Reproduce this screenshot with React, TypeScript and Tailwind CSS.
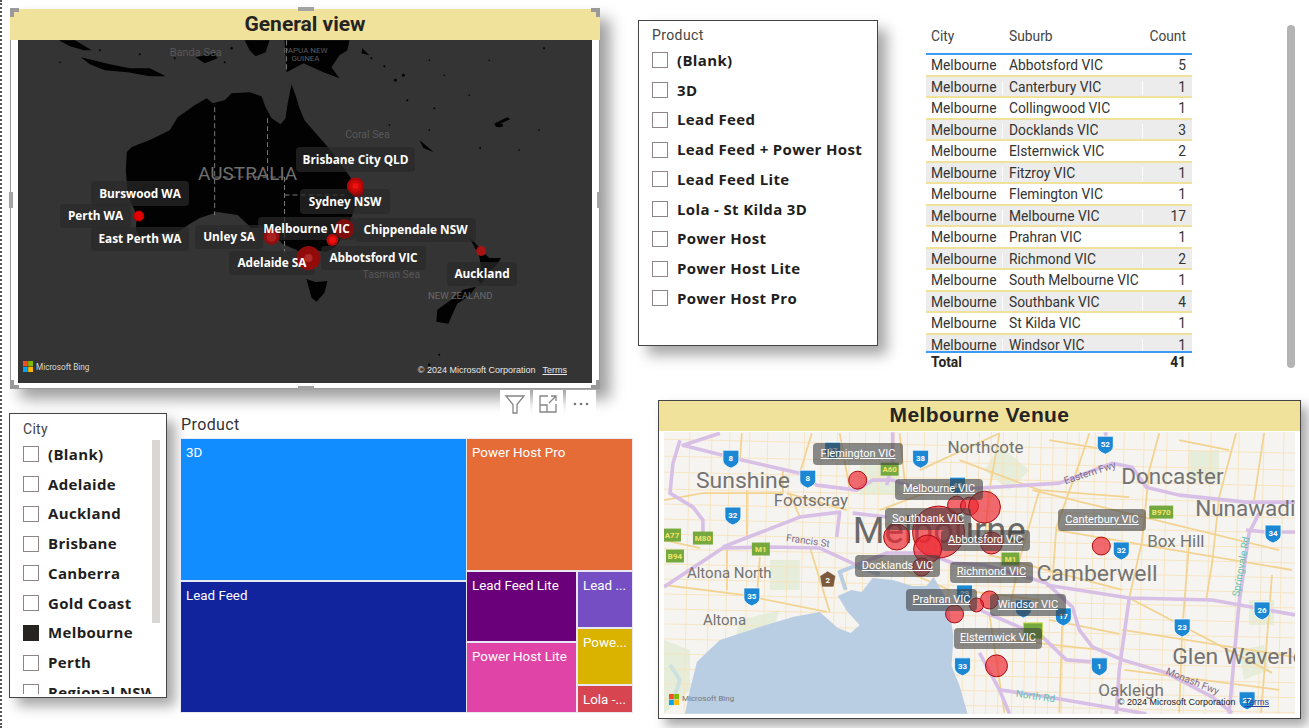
import React from "react";

const products = ["(Blank)", "3D", "Lead Feed", "Lead Feed + Power Host", "Lead Feed Lite", "Lola - St Kilda 3D", "Power Host", "Power Host Lite", "Power Host Pro"];
const cities = ["(Blank)", "Adelaide", "Auckland", "Brisbane", "Canberra", "Gold Coast", "Melbourne", "Perth", "Regional NSW"];
const rows: [string, number][] = [
  ["Abbotsford VIC", 5], ["Canterbury VIC", 1], ["Collingwood VIC", 1], ["Docklands VIC", 3], ["Elsternwick VIC", 2],
  ["Fitzroy VIC", 1], ["Flemington VIC", 1], ["Melbourne VIC", 17], ["Prahran VIC", 1], ["Richmond VIC", 2],
  ["South Melbourne VIC", 1], ["Southbank VIC", 4], ["St Kilda VIC", 1], ["Windsor VIC", 1],
];

// [text, left, top, width, height] relative to the map's top-left
const darkLabels: [string, number, number, number, number][] = [
  ["Burswood WA", 73, 141, 98, 25], ["Perth WA", 42, 164, 71, 24], ["East Perth WA", 73, 187, 98, 24],
  ["Unley SA", 177, 185, 68, 24], ["Melbourne VIC", 240, 177, 97, 23], ["Adelaide SA", 211, 211, 86, 24],
  ["Brisbane City QLD", 278, 107, 119, 25], ["Sydney NSW", 282, 149, 90, 25],
  ["Chippendale NSW", 337, 178, 121, 24], ["Abbotsford VIC", 303, 206, 105, 24], ["Auckland", 429, 222, 70, 24],
];
const venueLabels: [string, number, number, number, number][] = [
  ["Flemington VIC", 149, 11, 90, 22], ["Melbourne VIC", 231, 47, 88, 21], ["Southbank VIC", 221, 76, 86, 22],
  ["Abbotsford VIC", 277, 98, 89, 21], ["Docklands VIC", 191, 123, 85, 22], ["Richmond VIC", 286, 130, 83, 21],
  ["Prahran VIC", 242, 157, 71, 22], ["Windsor VIC", 326, 162, 76, 22], ["Elsternwick VIC", 290, 196, 88, 21],
  ["Canterbury VIC", 394, 77, 88, 22],
];

const Check = ({ on }: { on?: boolean }) => (
  <span className={on ? "h-4 w-4 shrink-0 border border-[#252423] bg-[#252423]" : "h-4 w-4 shrink-0 border border-[#8f8585] bg-white"} />
);

const SlicerRow = ({ label, on }: { label: string; on?: boolean }) => (
  <div className="flex h-[29.75px] shrink-0 items-center gap-[9px]">
    <Check on={on} />
    <span className="whitespace-nowrap font-['Open_Sans',sans-serif] text-[15px] leading-none font-bold tracking-[0.35px] text-[#1f1e1d]">{label}</span>
  </div>
);

const BingLogo = () => (
  <svg width="10" height="11" viewBox="0 0 10 11" className="shrink-0">
    <rect width="4.8" height="5.2" fill="#f25022" />
    <rect x="5.2" width="4.8" height="5.2" fill="#7fba00" />
    <rect y="5.8" width="4.8" height="5.2" fill="#00a4ef" />
    <rect x="5.2" y="5.8" width="4.8" height="5.2" fill="#ffb900" />
  </svg>
);

const Handle = ({ className }: { className: string }) => <div className={"absolute bg-[#a3a3a3] " + className} />;

const Corner = ({ className }: { className: string }) => <div className={"absolute h-[9px] w-[9px] border-[#9a9a9a] " + className} />;

const seaLabels: [string, number, number, number, string][] = [
  ["Banda Sea", 196, 56, 11, "#585858"], ["PAPUA NEW", 306, 53, 8, "#5c5c5c"], ["GUINEA", 306, 61, 8, "#5c5c5c"],
  ["Coral Sea", 368, 138, 10.5, "#585858"], ["Tasman Sea", 392, 278, 10.5, "#585858"], ["NEW ZEALAND", 461, 299, 9.5, "#6a6a6a"],
];
const specks: [number, number, number][] = [
  [396, 80, 1.5], [404, 75, 1.5], [435, 108, 1], [481, 148, 1], [372, 58, 1], [385, 66, 1], [408, 100, 1], [445, 75, 0.8], [470, 95, 0.8], [390, 125, 0.8],
  [520, 150, 0.8], [540, 130, 0.8], [545, 48, 1], [490, 60, 0.8], [430, 60, 0.8], [440, 355, 1], [430, 365, 1.2], [120, 70, 1], [175, 58, 1], [60, 62, 0.8],
  [100, 50, 1], [140, 54, 1], [225, 62, 1], [232, 48, 1.2], [430, 130, 0.8], [410, 170, 0.8], [376, 205, 0.6],
];

const DarkMapArt = () => (
  <svg viewBox="18 40 575 343" className="absolute inset-0 h-full w-full">
    <g fill="#020202">
      <path d="M127 152 132 147 150 140 170 130 178 117 195 105 207 98 213 103 225 100 232 93 250 92 262 96 266 107 272 118 281 124 286 118 288 104 292 84 296 95 300 108 305 120 318 135 331 150 342 165 350 176 357 188 358 200 354 212 348 228 342 238 335 248 326 252 315 250 305 256 297 250 283 244 275 235 268 240 262 228 252 228 238 215 218 212 200 218 190 224 178 232 160 233 140 237 136 230 137 215 128 195 126 170Z" />
      <path d="M307 279 316 282 328 281 325 293 317 302 312 298Z" />
      <path d="M470 237 476 243 482 250 490 258 502 258 498 264 490 272 482 284 478 280 482 268 480 256Z" />
      <path d="M477 287 470 296 458 304 449 324 437 322 438 310 452 300 464 290Z" />
      <path d="M285 40 287 72 304 63 324 72 340 78 332 67 340 55 348 50 350 40Z" />
      <path d="M59 40 75 40 92 50 84 50 70 46Z" />
      <path d="M81 57 110 64 130 68 150 68 166 76 150 76 128 72 105 70 90 64Z" />
      <path d="M245 40 270 40 266 52 256 56 250 50Z" />
      <path d="M196 57 214 53 218 58 205 63Z" />
      <path d="M363 48 370 55 362 53Z" />
      <path d="M420 140 432 150 434 152 424 148Z" />
      <path d="M494 124 508 117 511 119 500 124Z" />
      <ellipse cx="500" cy="125" rx="4" ry="2" />
      {specks.map(([x, y, r]) => <circle key={x + "-" + y} cx={x} cy={y} r={r} />)}
    </g>
    <g stroke="#7a7a7a" strokeWidth="1" strokeDasharray="5 3" fill="none">
      <path d="M215 107V215" /><path d="M268 118V177" /><path d="M215 177H285" /><path d="M285 177V253" /><path d="M285 195H345" /><path d="M287 40V72" />
    </g>
    {seaLabels.map(([t, x, y, s, c]) => (
      <text key={t} x={x} y={y} textAnchor="middle" fontFamily="Roboto, sans-serif" fontSize={s} fill={c}>{t}</text>
    ))}
    <text x="248" y="180" textAnchor="middle" fontFamily="Roboto, sans-serif" fontSize="19" fill="#6e6e6e">AUSTRALIA</text>
  </svg>
);

const DarkBubbles = () => (
  <svg viewBox="18 40 575 343" className="absolute inset-0 h-full w-full">
    <circle cx="139" cy="216" r="5" fill="#e00000" stroke="#b80000" />
    <circle cx="272" cy="237" r="8" fill="#8e0f0f" />
    <circle cx="272" cy="237" r="5" fill="#a82020" />
    <circle cx="358" cy="190" r="7" fill="#7c1010" />
    <circle cx="356" cy="186" r="8.5" fill="#ad0808" />
    <circle cx="356" cy="186" r="6" fill="#c90a0a" />
    <circle cx="356" cy="186" r="3" fill="#f21010" />
    <circle cx="345" cy="229" r="10" fill="#7c0e0e" />
    <circle cx="333" cy="240" r="6" fill="#b50b0b" />
    <circle cx="333" cy="240" r="3.5" fill="#ef0d0d" />
    <circle cx="309" cy="258" r="12" fill="#920b0b" />
    <circle cx="309" cy="258" r="4" fill="#b02a2a" />
    <circle cx="482" cy="251" r="5" fill="#a81313" />
  </svg>
);

const thinV = [690, 712, 730, 750, 768, 790, 805, 822, 838, 850, 866, 880, 895, 908, 925, 938, 952, 968, 980, 992, 1004, 1018, 1030, 1042, 1054, 1068, 1080, 1096, 1108, 1125, 1145, 1168, 1190, 1212, 1240, 1265, 1285];
const thinH = [445, 462, 478, 495, 510, 525, 540, 555, 570, 585, 600, 615, 630, 645, 660, 675, 690, 705];

const majorRoads = [
  "M664 585 743 595 827 612", "M727 550V590", "M760 557 757 597", "M810 547 830 612", "M703 493H783V470", "M747 490V540", "M787 493 847 510",
  "M740 460 742 433", "M664 500 703 493", "M664 540 700 548", "M800 517 790 493", "M812 433 800 473", "M840 433 850 490",
  "M1090 433 1080 463 1057 527 1053 580", "M1033 490 1280 550", "M1057 530 1293 570", "M1237 433 1220 497 1213 563 1207 600",
  "M1190 543 1183 630 1180 713", "M1123 630 1295 657", "M1000 433 990 490 985 540", "M960 460 1040 490 1130 497", "M1040 490 1020 560 1010 610",
  "M990 555 1123 590", "M1160 433 1150 470 1143 540 1130 598", "M1265 433 1255 500", "M1050 620 1120 634", "M1063 620 1060 713",
  "M1125 670 1280 690", "M1273 575 1262 713", "M1010 640 1100 650", "M1130 598 1273 673", "M900 433 905 480", "M920 470 1000 433", "M880 510 960 480",
  "M880 560 950 590", "M960 590 1040 600", "M990 615 1005 713", "M1050 440 1110 450", "M1180 440 1230 450",
];
const motorways = [
  "M680 440 673 463 670 493 693 507 703 520 703 543",
  "M720 433 683 445 743 460 800 473 817 485 857 490 873 480 893 480 913 487",
  "M664 587 723 548 770 547 820 548 857 565 887 553 927 553 953 563 985 565 1047 583 1073 607 1080 630 1093 647 1123 660 1167 673 1213 697 1233 713",
  "M940 490 980 488 1060 483 1113 463 1133 467 1147 487 1180 495 1247 502 1296 502",
  "M1047 585 1130 598 1213 600 1296 615",
  "M1130 598 1120 670 1117 714",
  "M1260 513 1250 533 1240 603 1230 714",
  "M980 610 1043 637 1067 660 1093 662",
  "M980 653 1000 690 1010 714",
  "M1000 690 1047 697 1147 714",
  "M723 547 800 517 840 512 837 537",
  "M853 513 887 517",
  "M893 432 893 463 887 485",
  "M1296 532 1267 532 1247 530",
  "M913 487 940 490",
  "M1106 432 1108 445",
];

const Shield = ({ x, y, n }: { x: number; y: number; n: string }) => (
  <g>
    <path d={`M${x - 8} ${y - 8}H${x + 8}V${y + 2}Q${x + 8} ${y + 7} ${x} ${y + 10}Q${x - 8} ${y + 7} ${x - 8} ${y + 2}Z`} fill="#1c87d3" stroke="#fff" strokeWidth="0.8" />
    <text x={x} y={y + 3} textAnchor="middle" fontFamily="Roboto, sans-serif" fontWeight="700" fontSize="8" fill="#fff">{n}</text>
  </g>
);
const Badge = ({ x, y, n, w = 16 }: { x: number; y: number; n: string; w?: number }) => (
  <g>
    <rect x={x - w / 2} y={y - 6.5} width={w} height="13" fill="#76a93d" />
    <text x={x} y={y + 3} textAnchor="middle" fontFamily="Roboto, sans-serif" fontWeight="700" fontSize="8" fill="#f3e36b">{n}</text>
  </g>
);

const places: [string, number, number, number][] = [
  ["Sunshine", 696, 488, 23], ["Footscray", 774, 506, 17], ["Northcote", 948, 453, 17], ["Doncaster", 1122, 484, 22.5],
  ["Nunawading", 1196, 516, 22.5], ["Box Hill", 1148, 547, 17], ["Camberwell", 1037, 581, 23], ["Altona North", 687, 578, 15],
  ["Altona", 703, 625, 15], ["Glen Waverley", 1173, 664, 23], ["Oakleigh", 1099, 696, 17],
];
const bubbles: [number, number, number][] = [
  [858, 480, 9], [897, 537, 13], [939, 532, 26], [928, 549, 14], [922, 567, 9], [957, 505, 9], [970, 506, 9], [985, 507, 16],
  [992, 543, 11], [1102, 546, 9], [997, 666, 11], [990, 600, 9], [977, 605, 7], [955, 614, 9],
];

const VenueMapArt = () => (
  <svg viewBox="664 432 632 282" className="absolute inset-0 h-full w-full">
    <g fill="#e6eedb">
      <path d="M664 640 690 650 690 690 664 714Z" /><path d="M1000 445 1030 470 1010 490 985 470Z" /><path d="M1190 450H1220V480H1190Z" />
      <path d="M1250 600H1275V625H1250Z" /><path d="M1240 650 1265 645 1270 670 1245 680Z" /><path d="M770 560H800V590H770Z" /><path d="M860 465H900V495H860Z" /><path d="M740 620 780 610 770 640 735 640Z" />
    </g>
    <g stroke="#f6e3bd" strokeWidth="0.9" fill="none">
      {thinV.map((x) => <path key={x} d={`M${x} 432 ${x - 6} 714`} />)}
      {thinH.map((y) => <path key={y} d={`M664 ${y - 6} 1296 ${y + 8}`} />)}
    </g>
    <g stroke="#f2d392" strokeWidth="1.8" fill="none" strokeLinejoin="round">
      {majorRoads.map((d) => <path key={d} d={d} />)}
    </g>
    <path d="M685 714 690 690 697 662 720 640 760 627 793 617 820 612 838 628 851 633 860 625 848 612 838 596 852 590 862 592 873 578 893 580 913 586 927 586 934 577 949 603 954 637 952 666 960 686 968 714Z" fill="#b9cde3" />
    <path d="M846 590 840 572 855 566 880 574" fill="none" stroke="#b9cde3" strokeWidth="4" />
    <path d="M670 665 680 680 672 705" fill="none" stroke="#cfe0e0" strokeWidth="4" />
    <g stroke="#d8bfe6" strokeWidth="3.6" fill="none" strokeLinejoin="round">
      {motorways.map((d) => <path key={d} d={d} />)}
    </g>
    {places.map(([t, x, y, s]) => (
      <text key={t} x={x} y={y} fontFamily="Roboto, sans-serif" fontSize={s} fill="#737373">{t}</text>
    ))}
    <text x="853" y="543" fontFamily="Roboto, sans-serif" fontSize="36.5" fill="#6a6a6a">Melbourne</text>
    <text x="786" y="541" fontFamily="Roboto, sans-serif" fontSize="10" fill="#7c6a8a" transform="rotate(8 786 541)">Francis St</text>
    <text x="1066" y="484" fontFamily="Roboto, sans-serif" fontSize="10" fill="#7c6a8a" transform="rotate(-18 1066 484)">Eastern Fwy</text>
    <text x="1166" y="674" fontFamily="Roboto, sans-serif" fontSize="10" fill="#7c6a8a" transform="rotate(22 1166 674)">Monash Fwy</text>
    <text x="1016" y="697" fontFamily="Roboto, sans-serif" fontSize="10" fill="#66c2ac" transform="rotate(8 1016 697)">North Rd</text>
    <text x="1240" y="597" fontFamily="Roboto, sans-serif" fontSize="10" fill="#66c2ac" transform="rotate(-80 1240 597)">Springvale Rd</text>
    {([[731, 458, "8"], [808, 478, "8"], [733, 515, "32"], [921, 458, "38"], [752, 596, "35"], [963, 666, "33"], [965, 593, "29"], [958, 485, "45"], [833, 450, "37"], [1106, 444, "52"], [1122, 550, "32"], [1274, 533, "34"], [1263, 610, "26"], [1183, 627, "23"], [1100, 666, "1"], [1064, 616, "17"], [1248, 700, "27"], [1024, 608, ""]] as [number, number, string][]).map(([x, y, n]) => <Shield key={x + "-" + y} x={x} y={y} n={n} />)}
    <Badge x={672} y={535} n="A77" w={18} /><Badge x={703} y={538} n="M80" w={20} /><Badge x={675} y={556} n="B94" w={18} />
    <Badge x={761} y={549} n="M1" w={18} /><Badge x={890} y={469} n="A60" w={18} /><Badge x={1011} y={559} n="M1" w={18} /><Badge x={1162} y={512} n="B970" w={24} />
    <rect x="1024" y="623" width="19" height="16" fill="#76a93d" stroke="#c9d84a" />
    <path d="M828 571 836 576 834 587H822L820 576Z" fill="#7d5a3c" stroke="#fff" strokeWidth="0.6" />
    <text x="828" y="583" textAnchor="middle" fontFamily="Roboto, sans-serif" fontWeight="700" fontSize="8" fill="#fff">2</text>
    {bubbles.map(([x, y, r]) => <circle key={x + "-" + y} cx={x} cy={y} r={r} fill="#ee2630" fillOpacity="0.68" stroke="#a80c12" strokeWidth="1" />)}
  </svg>
);

const Cell = ({ label, className }: { label: string; className: string }) => (
  <div className={"overflow-hidden whitespace-nowrap pl-[5px] pt-[5px] font-['Roboto',sans-serif] text-[13.4px] leading-[18px] text-white " + className}>{label}</div>
);

export default function App() {
  return (
    <div className="flex h-[728px] w-[1309px] overflow-hidden border-l-2 border-dotted border-[#555] bg-white font-['Roboto',sans-serif]">
      {/* left column */}
      <div className="relative w-[636px] shrink-0">
        <section className="relative z-10 mt-[9px] ml-[8px] flex h-[380px] w-[590px] flex-col border-x border-b border-[#9b9b9b] bg-white shadow-[10px_10px_14px_rgba(0,0,0,0.38)]">
          <h1 className="-mx-px flex h-[31px] shrink-0 items-center justify-center bg-[#f0e19b] text-[21px] leading-none font-bold text-[#252423]">General view</h1>
          <div className="relative mx-[7px] h-[343px] bg-[#343434]">
            <DarkMapArt />
            {darkLabels.map(([t, l, top, w, h]) => (
              <div key={t} className="absolute rounded bg-[#2a2a2a]/70" style={{ left: l, top, width: w, height: h }} />
            ))}
            <DarkBubbles />
            {darkLabels.map(([t, l, top, w, h]) => (
              <div key={t} className="absolute flex items-center justify-center font-['Open_Sans',sans-serif] text-[11.8px] font-bold whitespace-nowrap text-white" style={{ left: l, top, width: w, height: h }}>{t}</div>
            ))}
            <div className="absolute bottom-[10px] left-[5px] flex items-center gap-[3px] text-[8.2px] text-[#d8d8d8]"><BingLogo />Microsoft Bing</div>
            <div className="absolute right-[25px] bottom-[6px] flex gap-[7px] font-['Liberation_Sans',sans-serif] text-[9px] text-[#e8e8e8]"><span>© 2024 Microsoft Corporation</span><span className="underline">Terms</span></div>
          </div>
          <Corner className="-top-[1px] -left-[1px] border-t-4 border-l-4" />
          <Corner className="-top-[1px] -right-[1px] border-t-4 border-r-4" />
          <Corner className="-bottom-[1px] -left-[1px] border-b-4 border-l-4" />
          <Corner className="-right-[1px] -bottom-[1px] border-r-4 border-b-4" />
          <Handle className="-top-[2px] left-[287px] h-[4px] w-[16px]" />
          <Handle className="-bottom-[2px] left-[287px] h-[4px] w-[16px]" />
          <Handle className="top-[183px] -left-[2px] h-[16px] w-[4px]" />
          <Handle className="top-[183px] -right-[2px] h-[16px] w-[4px]" />
        </section>
        <div className="absolute top-[390px] left-[498px] z-20 flex gap-[3px]">
          <div className="flex h-[28px] w-[30px] items-center justify-center bg-white">
            <svg width="22" height="22" viewBox="0 0 22 22" fill="none" stroke="#858585" strokeWidth="1.3"><path d="M2 3h18l-7 8.5V20h-4v-8.5Z" /></svg>
          </div>
          <div className="flex h-[28px] w-[30px] items-center justify-center bg-white">
            <svg width="20" height="20" viewBox="0 0 20 20" fill="none" stroke="#858585" strokeWidth="1.3"><path d="M10 2H2v16h16v-8" /><path d="M2 11h7v7" /><path d="M11 9l7-7M13 2h5v5" /></svg>
          </div>
          <div className="flex h-[28px] w-[30px] items-center justify-center bg-white">
            <svg width="18" height="6" viewBox="0 0 18 6" fill="#777"><circle cx="3" cy="3" r="1.3" /><circle cx="9" cy="3" r="1.3" /><circle cx="15" cy="3" r="1.3" /></svg>
          </div>
        </div>

        <div className="mt-[24px] flex">
          <aside className="ml-[7px] h-[285px] w-[158px] shrink-0 border border-[#444] bg-white pt-[7px] pl-[13px] shadow-[8px_8px_12px_rgba(0,0,0,0.35)]">
            <div className="text-[14px] leading-[16px] tracking-[0.3px] text-[#444]">City</div>
            <div className="mt-[2.5px] flex">
              <div className="h-[254px] w-[129px] overflow-hidden">
                {cities.map((c) => <SlicerRow key={c} label={c} on={c === "Melbourne"} />)}
              </div>
              <div className="h-[183px] w-[8px] bg-[#d8d7d4]" />
            </div>
          </aside>
          <div className="ml-[13px] w-[453px]">
            <div className="h-[25px] pt-[2px] pl-px text-[16px] leading-[19px] tracking-[0.4px] text-[#333]">Product</div>
            <div className="flex h-[275px] gap-[1px] bg-[#e8e8f5] p-[1px]">
              <div className="flex w-[285px] flex-col gap-[2px]">
                <Cell label="3D" className="h-[141px] bg-[#118dff]" />
                <Cell label="Lead Feed" className="flex-1 bg-[#12239e]" />
              </div>
              <div className="flex w-[165px] flex-col gap-[2px]">
                <Cell label="Power Host Pro" className="h-[131px] bg-[#e66c37]" />
                <div className="flex flex-1 gap-[2px]">
                  <div className="flex w-[109px] flex-col gap-[2px]">
                    <Cell label="Lead Feed Lite" className="h-[69px] bg-[#6b007b]" />
                    <Cell label="Power Host Lite" className="flex-1 bg-[#e044a7]" />
                  </div>
                  <div className="flex flex-1 flex-col gap-[2px]">
                    <Cell label="Lead ..." className="h-[55px] bg-[#744ec2]" />
                    <Cell label="Powe..." className="h-[55px] bg-[#d9b300]" />
                    <Cell label="Lola -..." className="flex-1 bg-[#d64550]" />
                  </div>
                </div>
              </div>
            </div>
          </div>
        </div>
      </div>

      {/* right column */}
      <div className="flex-1">
        <div className="flex h-[400px]">
          <aside className="mt-[20px] h-[326px] w-[240px] shrink-0 border border-[#444] bg-white pt-[6px] pl-[13px] shadow-[9px_9px_13px_rgba(0,0,0,0.35)]">
            <div className="text-[14px] leading-[16px] tracking-[0.4px] text-[#444]">Product</div>
            <div className="mt-[2.5px]">
              {products.map((p) => <SlicerRow key={p} label={p} />)}
            </div>
          </aside>
          <div className="mt-[20px] ml-[48px] w-[266px] text-[13.8px] leading-none text-[#333]">
            <div className="flex h-[35px] items-center border-b-2 border-[#3b9cf5] text-[#444]">
              <span className="w-[77px] pl-[5px]">City</span>
              <span className="w-[140px] pl-[6px]">Suburb</span>
              <span className="flex-1 pr-[6px] text-right">Count</span>
            </div>
            <div className="h-[296px] overflow-hidden">
              {rows.map(([s, n], i) => (
                <div key={s} className={i % 2 ? "flex h-[21.5px] items-center border-b-2 border-[#f0e19b] bg-[#ececec] pt-[3px]" : "flex h-[21.5px] items-center border-b-2 border-[#f0e19b] bg-white pt-[3px]"}>
                  <span className="w-[77px] border-r border-white pl-[5px]">Melbourne</span>
                  <span className="w-[140px] border-r border-white pl-[6px]">{s}</span>
                  <span className="flex-1 pr-[6px] text-right">{n}</span>
                </div>
              ))}
            </div>
            <div className="flex h-[21px] items-center border-t-2 border-[#3b9cf5] font-bold text-[#252423]">
              <span className="w-[217px] pl-[5px]">Total</span>
              <span className="flex-1 pr-[6px] text-right">41</span>
            </div>
          </div>
          <div className="mt-[25px] ml-[95px] h-[343px] w-[8px] rounded bg-[#b4b4b4]" />
        </div>
        <section className="ml-[20px] flex h-[319px] w-[643px] flex-col border border-[#444] bg-white shadow-[7px_7px_11px_rgba(0,0,0,0.35)]">
          <h2 className="flex h-[30px] shrink-0 items-center justify-center bg-[#f0e19b] pb-[3px] font-['Liberation_Sans',sans-serif] text-[21px] leading-none font-bold tracking-[0.4px] text-[#252423]">Melbourne Venue</h2>
          <div className="relative mx-[5px] mt-px h-[282px] bg-[#f6f4f0]">
            <VenueMapArt />
            {venueLabels.map(([t, l, top, w, h]) => (
              <div key={t} className="absolute flex items-center justify-center rounded bg-[#404040]/60 text-[11px] whitespace-nowrap text-white underline" style={{ left: l, top, width: w, height: h }}>{t}</div>
            ))}
            <div className="absolute bottom-[9px] left-[5px] flex items-center gap-[3px] text-[8px] text-[#777]"><BingLogo />Microsoft Bing</div>
            <div className="absolute right-[26px] bottom-[5px] flex gap-[9px] font-['Liberation_Sans',sans-serif] text-[9px] text-[#222]"><span>© 2024 Microsoft Corporation</span><span className="text-[#2b3f9e] underline">Terms</span></div>
          </div>
        </section>
      </div>
    </div>
  );
}
